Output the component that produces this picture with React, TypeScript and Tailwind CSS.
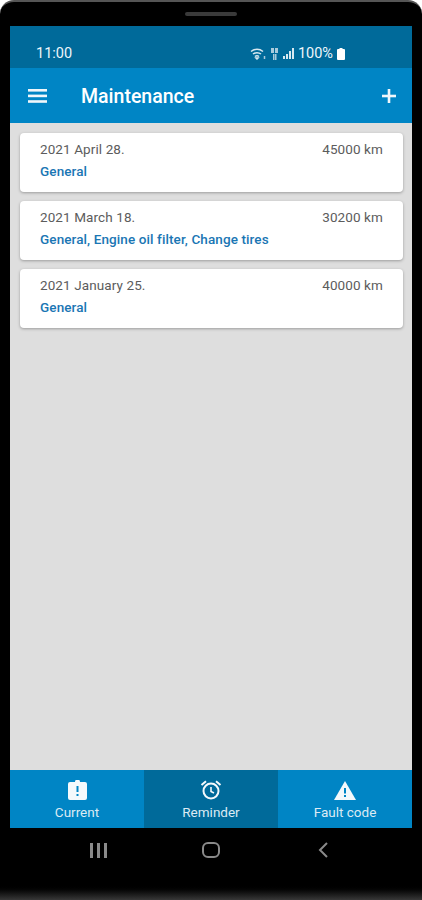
const cards = [
  { date: "2021 April 28.", km: "45000 km", items: "General" },
  { date: "2021 March 18.", km: "30200 km", items: "General, Engine oil filter, Change tires" },
  { date: "2021 January 25.", km: "40000 km", items: "General" },
];

function Tab({ label, active, children }: { label: string; active?: boolean; children: React.ReactNode }) {
  return (
    <div className={`flex flex-col items-center pt-[10px] ${active ? "bg-[#006a9a] w-[134px]" : "flex-1"}`}>
      <div className="flex h-[20px] items-end">{children}</div>
      <span className="mt-[4px] text-[13.5px] leading-[16px] text-[#dcebf4]">{label}</span>
    </div>
  );
}

export default function App() {
  return (
    <div className="h-[900px] w-[422px] overflow-hidden bg-white font-['Roboto',sans-serif]">
      <div className="flex h-full flex-col rounded-[14px] border-t-[2px] border-t-[#555] bg-black">
        <div className="flex h-[24px] justify-center pt-[10px]">
          <div className="h-[4px] w-[52px] rounded-full bg-[#3a3a3a]" />
        </div>
        <div className="mx-[10px] flex h-[802px] flex-col bg-[#dedede]">
          <div className="flex h-[42px] items-center justify-between bg-[#006a9a] pt-[14px] pr-[67px] pl-[26px] text-[#eef6fa]">
            <span className="text-[14.5px]">11:00</span>
            <div className="flex items-center gap-[4px]">
              <svg width="16" height="12" viewBox="0 0 16 12" fill="none" stroke="#d8e8f0" strokeWidth="1.5">
                <path d="M1 3.5C4.5.5 9.5.5 13 3.5" />
                <path d="M3 6C5.2 4.2 8.8 4.2 11 6" />
                <path d="M5 8.5c1.2-1 2.8-1 4 0" />
                <path d="M7 11l1-1H6z" fill="#d8e8f0" />
                <path d="M14.5 8v3" stroke="#a9cbdc" />
              </svg>
              <svg width="9" height="12" viewBox="0 0 9 12" fill="#a9cbdc">
                <rect x="1" y="0" width="3" height="5" />
                <rect x="5" y="0" width="3" height="5" />
                <rect x="3" y="6" width="1.5" height="6" />
                <rect x="5" y="6" width="1.5" height="6" />
              </svg>
              <svg width="11" height="12" viewBox="0 0 11 12" fill="#d8e8f0">
                <rect x="0" y="8" width="2" height="3" />
                <rect x="3" y="6" width="2" height="5" />
                <rect x="6" y="3" width="2" height="8" />
                <rect x="9" y="0" width="2" height="11" />
              </svg>
              <span className="text-[14.5px] leading-none">100%</span>
              <svg width="8" height="12" viewBox="0 0 8 12" fill="#fff">
                <path d="M2.5 0h3v1H7a1 1 0 0 1 1 1v9a1 1 0 0 1-1 1H1a1 1 0 0 1-1-1V2a1 1 0 0 1 1-1h1.5z" />
              </svg>
            </div>
          </div>
          <div className="flex h-[55px] items-center bg-[#0085c5] pr-[16px] pl-[18px] text-white">
            <svg width="19" height="14" viewBox="0 0 19 14" fill="#f0f7fb">
              <rect y="0" width="19" height="2.6" />
              <rect y="5.6" width="19" height="2.6" />
              <rect y="11.2" width="19" height="2.6" />
            </svg>
            <span className="ml-[34px] flex-1 pt-[2px] text-[19.5px] leading-none font-medium">Maintenance</span>
            <svg width="14" height="14" viewBox="0 0 14 14" fill="#f0f7fb">
              <rect y="5.7" width="14" height="2.6" />
              <rect x="5.7" width="2.6" height="14" />
            </svg>
          </div>
          <div className="flex flex-1 flex-col gap-[9px] pt-[10px] pr-[9px] pl-[10px]">
            {cards.map(c => (
              <div key={c.date} className="h-[59px] rounded-[4px] bg-white px-[20px] pt-[8px] shadow-[0_1px_3px_rgba(0,0,0,0.3)]">
                <div className="flex justify-between text-[13.5px] leading-[16px] tracking-[0.1px] text-[#5c5c5c]">
                  <span>{c.date}</span>
                  <span>{c.km}</span>
                </div>
                <div className="mt-[6px] text-[13.5px] leading-[16px] font-medium tracking-[0.1px] text-[#1a76b4]">{c.items}</div>
              </div>
            ))}
          </div>
          <div className="flex h-[58px] bg-[#0085c5]">
            <Tab label="Current">
              <svg width="19" height="20" viewBox="0 0 19 20" fill="#f4f9fc">
                <path d="M2 2h5a2.5 2.5 0 0 1 5 0h5a2 2 0 0 1 2 2v14a2 2 0 0 1-2 2H2a2 2 0 0 1-2-2V4a2 2 0 0 1 2-2z" />
                <rect x="8.5" y="6" width="2" height="6" fill="#0085c5" />
                <rect x="8.5" y="14" width="2" height="2" fill="#0085c5" />
              </svg>
            </Tab>
            <Tab label="Reminder" active>
              <svg width="22" height="20" viewBox="0 0 22 20" fill="none" stroke="#f4f9fc" strokeWidth="2">
                <circle cx="11" cy="11" r="7.5" />
                <path d="M11 7v4.5l3 1.5" strokeWidth="1.6" />
                <path d="M1.5 5L6 1.2M20.5 5L16 1.2" />
              </svg>
            </Tab>
            <Tab label="Fault code">
              <svg width="22" height="19" viewBox="0 0 22 19" fill="#f4f9fc">
                <path d="M11 0l11 19H0z" />
                <rect x="10" y="7" width="2" height="5.5" fill="#0085c5" />
                <rect x="10" y="14" width="2" height="2" fill="#0085c5" />
              </svg>
            </Tab>
          </div>
        </div>
        <div className="flex h-[44px] items-center">
          <div className="flex w-[197px] justify-center gap-[4px]">
            <div className="h-[15px] w-[3px] bg-[#8a8a8a]" />
            <div className="h-[15px] w-[3px] bg-[#8a8a8a]" />
            <div className="h-[15px] w-[3px] bg-[#8a8a8a]" />
          </div>
          <div className="ml-[5px] h-[16px] w-[18px] rounded-[6px] border-[2px] border-[#8a8a8a]" />
          <svg className="ml-[97px]" width="11" height="16" viewBox="0 0 11 16" fill="none" stroke="#8a8a8a" strokeWidth="2">
            <path d="M10 1L3 8l7 7" />
          </svg>
        </div>
        <div className="mt-auto h-[16px] bg-gradient-to-b from-black to-[#383838]" />
      </div>
    </div>
  );
}
